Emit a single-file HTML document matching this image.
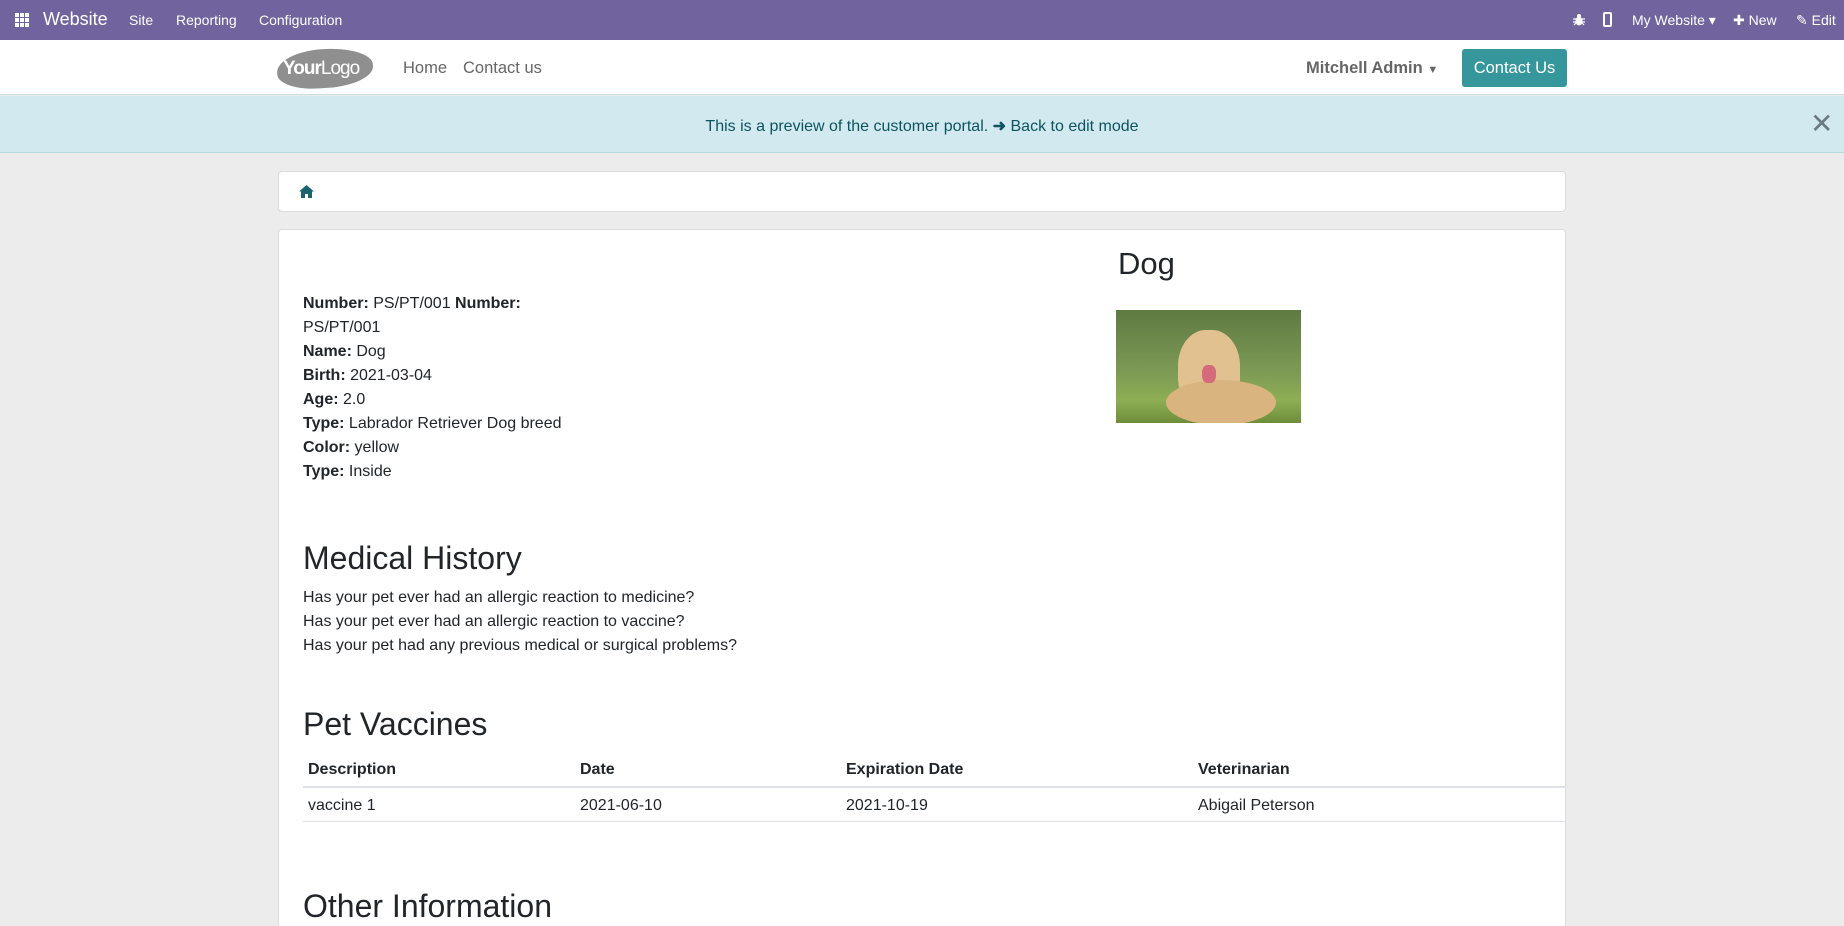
<!DOCTYPE html>
<html style="overflow:hidden;height:926px"><head><meta charset="utf-8"><style>
*{box-sizing:border-box;margin:0;padding:0}
body{width:1844px;height:926px;overflow:hidden;background:#ececec;font-family:"Liberation Sans",sans-serif;color:#212529;position:relative}
.a{position:absolute;white-space:nowrap}
.top{position:absolute;left:0;top:0;width:1844px;height:40px;background:#71639e;color:#fff}
.top .a{font-size:14px;top:12px}
.hdr{position:absolute;left:0;top:40px;width:1844px;height:55px;background:#fff;border-bottom:1px solid #c6dde3}
.ban{position:absolute;left:0;top:96px;width:1844px;height:57px;background:#d1e9ef;border-bottom:1px solid #b7dbe3}
.card{position:absolute;left:278px;width:1288px;background:#fff;border:1px solid #dcdcdc;border-radius:4px}
.f{font-size:16px;left:303px}
.f b{font-weight:bold}
h2{font-weight:normal;font-size:32px;position:absolute;left:303px;white-space:nowrap}
</style></head><body>
<div class="top">
 <svg class="a" style="left:15px;top:13px" width="14" height="14" viewBox="0 0 14 14" fill="#fff"><rect x="0" y="0" width="4" height="4"/><rect x="5" y="0" width="4" height="4"/><rect x="10" y="0" width="4" height="4"/><rect x="0" y="5" width="4" height="4"/><rect x="5" y="5" width="4" height="4"/><rect x="10" y="5" width="4" height="4"/><rect x="0" y="10" width="4" height="4"/><rect x="5" y="10" width="4" height="4"/><rect x="10" y="10" width="4" height="4"/></svg>
 <div class="a" style="left:43px;top:9px;font-size:18px">Website</div>
 <div class="a" style="left:129px">Site</div>
 <div class="a" style="left:176px">Reporting</div>
 <div class="a" style="left:259px">Configuration</div>
 <svg class="a" style="left:1573px;top:13px" width="12" height="13" viewBox="0 0 12 13" fill="#fff"><ellipse cx="6" cy="8" rx="3.5" ry="4.5"/><circle cx="6" cy="3" r="2"/><path d="M0 6h12M0 9h12M1 12l2-2M11 12l-2-2" stroke="#fff" stroke-width="1.2"/></svg>
 <div class="a" style="left:1603px;top:12px;width:9px;height:15px;border:2px solid #fff;border-radius:2px"></div>
 <div class="a" style="left:1632px">My Website ▾</div>
 <div class="a" style="left:1733px">✚ New</div>
 <div class="a" style="left:1796px">✎ Edit</div>
</div>
<div class="hdr">
 <div class="a" style="left:277px;top:9px;width:96px;height:39px;background:#8f8f8f;border-radius:50% 55% 50% 45%/55% 50% 50% 45%;transform:rotate(-4deg)"></div>
 <div class="a" style="left:283px;top:18px;font-size:19px;color:#fff;letter-spacing:-1px"><b>Your</b>Logo</div>
 <div class="a" style="left:403px;top:19px;font-size:16.5px;color:#666">Home</div>
 <div class="a" style="left:463px;top:19px;font-size:16.5px;color:#666">Contact us</div>
 <div class="a" style="left:1306px;top:19px;font-size:16.5px;color:#666;font-weight:bold">Mitchell Admin <span style="font-size:11px;font-weight:normal">▼</span></div>
 <div class="a" style="left:1462px;top:9px;width:105px;height:38px;background:#35979c;border-radius:3px;color:#fff;font-size:16.5px;text-align:center;line-height:39px">Contact Us</div>
</div>
<div class="ban">
 <div class="a" style="left:0;width:1844px;text-align:center;top:20px;font-size:16px;color:#0c5460">This is a preview of the customer portal. <b>➜</b> Back to edit mode</div>
 <div class="a" style="left:1810px;top:11px;font-size:28px;color:#6b7b80">✕</div>
</div>
<div class="card" style="top:171px;height:41px">
 <svg class="a" style="left:20px;top:13px" width="15" height="13" viewBox="0 0 15 13" fill="#1c6370"><path d="M7.5 0L0 6.5h2V13h4V9h3v4h4V6.5h2z"/></svg>
</div>
<div class="card" style="top:229px;height:720px;border-bottom:none"></div>
<div class="a" style="left:1118px;top:246px;font-size:31px">Dog</div>
<div class="a" style="left:1116px;top:310px;width:185px;height:113px;background:linear-gradient(180deg,#5f7a42 0%,#7d9a55 55%,#8eae54 80%,#6d8d3a 100%);overflow:hidden">
 <div class="a" style="left:62px;top:20px;width:62px;height:80px;background:#e2c190;border-radius:45% 45% 40% 40%"></div>
 <div class="a" style="left:50px;top:70px;width:110px;height:45px;background:#d9b47f;border-radius:50%"></div>
 <div class="a" style="left:86px;top:55px;width:14px;height:18px;background:#d46a7a;border-radius:40%"></div>
</div>
<div class="a f" style="top:295px"><b>Number:</b> PS/PT/001 <b>Number:</b></div>
<div class="a f" style="top:319px">PS/PT/001</div>
<div class="a f" style="top:343px"><b>Name:</b> Dog</div>
<div class="a f" style="top:367px"><b>Birth:</b> 2021-03-04</div>
<div class="a f" style="top:391px"><b>Age:</b> 2.0</div>
<div class="a f" style="top:415px"><b>Type:</b> Labrador Retriever Dog breed</div>
<div class="a f" style="top:439px"><b>Color:</b> yellow</div>
<div class="a f" style="top:463px"><b>Type:</b> Inside</div>
<h2 style="top:540px">Medical History</h2>
<div class="a f" style="top:589px">Has your pet ever had an allergic reaction to medicine?</div>
<div class="a f" style="top:613px">Has your pet ever had an allergic reaction to vaccine?</div>
<div class="a f" style="top:637px">Has your pet had any previous medical or surgical problems?</div>
<h2 style="top:706px">Pet Vaccines</h2>
<div class="a" style="left:303px;top:786px;width:1263px;height:2px;background:#dee2e6"></div>
<div class="a" style="left:303px;top:821px;width:1263px;height:1px;background:#dee2e6"></div>
<div class="a f" style="top:761px;left:308px;font-weight:bold">Description</div>
<div class="a f" style="top:761px;left:580px;font-weight:bold">Date</div>
<div class="a f" style="top:761px;left:846px;font-weight:bold">Expiration Date</div>
<div class="a f" style="top:761px;left:1198px;font-weight:bold">Veterinarian</div>
<div class="a f" style="top:797px;left:308px">vaccine 1</div>
<div class="a f" style="top:797px;left:580px">2021-06-10</div>
<div class="a f" style="top:797px;left:846px">2021-10-19</div>
<div class="a f" style="top:797px;left:1198px">Abigail Peterson</div>
<h2 style="top:888px">Other Information</h2>
</body></html>
